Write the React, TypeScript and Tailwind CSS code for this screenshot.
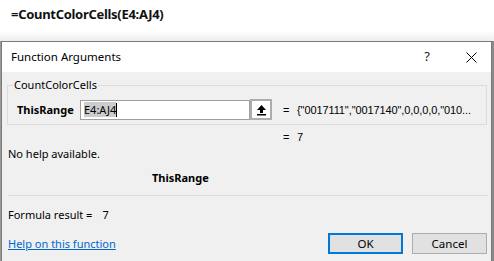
import React from "react";

const ui = { fontFamily: '"Noto Sans", "Open Sans", sans-serif' };
const classic = { fontFamily: '"Liberation Sans", Arial, sans-serif' };

function UploadIcon() {
  return (
    <svg width="11" height="12" viewBox="0 0 11 12">
      <path d="M5.5 1 L10 6 L7 6 L7 9 L4 9 L4 6 L1 6 Z" fill="#000" />
      <rect x="1" y="10" width="9" height="1.5" fill="#000" />
    </svg>
  );
}

function CloseIcon() {
  return (
    <svg width="11" height="11" viewBox="0 0 11 11">
      <path d="M0.5 0.5 L10.5 10.5 M10.5 0.5 L0.5 10.5" stroke="#000" strokeWidth="1" />
    </svg>
  );
}

export default function App() {
  return (
    <div className="w-[494px] h-[261px] overflow-hidden bg-white text-black" style={ui}>
      {/* worksheet formula bar behind the dialog */}
      <div className="h-[41px] bg-gradient-to-b from-white from-75% to-[#ededed]">
        <div className="pl-[11px] pt-[4px] text-[13px] tracking-[-0.3px] font-bold leading-[20px] text-[#111]">
          =CountColorCells(E4:AJ4)
        </div>
      </div>

      <div className="flex h-[220px]">
        <div className="w-[1px] bg-[#9a9a9a]" />
        <div className="w-[491px] border border-[#7a7a7a] border-b-0 flex flex-col">
          {/* title bar */}
          <div className="h-[30px] bg-white flex items-center pl-[9px] pr-[14px] text-[11.5px]">
            <span className="flex-1">Function Arguments</span>
            <span className="mr-[36px] text-[13px] text-[#222]">?</span>
            <CloseIcon />
          </div>

          {/* body */}
          <div className="flex-1 bg-[#f0f0f0] text-[11px] leading-[16px]">
            <fieldset className="mt-[5px] ml-[5px] mr-[4px] border border-[#dcdcdc] pt-[6px] pb-[4px]">
              <legend className="ml-[5px] px-[1px]">CountColorCells</legend>
              <div className="flex items-center pl-[9px]">
                <span className="w-[63px] font-bold">ThisRange</span>
                <div className="w-[170px] h-[20px] bg-white border border-[#a0a0a0] flex items-center pl-[3px]">
                  <span className="bg-[#cccccc] leading-[15px]">E4:AJ4</span>
                  <span className="w-[1px] h-[14px] bg-black" />
                </div>
                <div className="w-[22px] h-[21px] border-2 border-[#adadad] bg-white flex items-center justify-center">
                  <UploadIcon />
                </div>
                <span className="ml-[11px] w-[14px] text-[11px]" style={classic}>=</span>
                <span className="text-[11px] tracking-[-0.1px] whitespace-nowrap" style={classic}>
                  {'{"0017111","0017140",0,0,0,0,"010...'}
                </span>
              </div>
            </fieldset>

            <div className="mt-[4px] pl-[281px] flex text-[11px]" style={classic}>
              <span className="w-[14px]">=</span>
              <span>7</span>
            </div>

            <div className="mt-[1px] pl-[6px]">No help available.</div>

            <div className="mt-[8px] pl-[150px] font-bold">ThisRange</div>

            <div className="mt-[9px] ml-[6px] mr-[3px] h-[1px] bg-[#dcdcdc]" />

            <div className="mt-[11px] pl-[6px] flex">
              <span>Formula result =</span>
              <span className="ml-[10px]">7</span>
            </div>

            <div className="mt-[10px] pl-[6px] pr-[4px] flex items-center">
              <a className="flex-1 text-[#0066cc] underline">Help on this function</a>
              <button className="w-[75px] h-[21px] bg-[#e1e1e1] border-2 border-[#0078d7] text-[11.5px]">
                OK
              </button>
              <button className="ml-[9px] w-[75px] h-[21px] bg-[#e1e1e1] border border-[#adadad] text-[11.5px]">
                Cancel
              </button>
            </div>
          </div>
        </div>
        <div className="flex-1 bg-[#8a8a8a]" />
      </div>
    </div>
  );
}
